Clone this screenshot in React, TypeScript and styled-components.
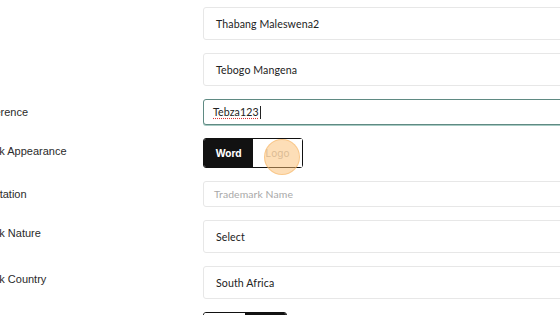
import React from "react";
import styled, { createGlobalStyle } from "styled-components";

const GlobalStyle = createGlobalStyle`
  html, body {
    margin: 0;
    padding: 0;
    background: #ffffff;
    overflow: hidden;
  }
`;

const Form = styled.div`
  display: flex;
  flex-direction: column;
  gap: 13px;
  padding-top: 7px;
  margin-left: -48px;
  width: 700px;
`;

const Row = styled.div`
  display: grid;
  grid-template-columns: 251px 420px;
  align-items: start;
`;

const Label = styled.div`
  font-family: "Liberation Sans", Arial, sans-serif;
  font-size: 11px;
  line-height: 16px;
  color: #2a2a2a;
  padding-top: 5px;
  white-space: nowrap;
`;

const Field = styled.div<{ $height: number; $focused?: boolean; $inset?: number }>`
  box-sizing: border-box;
  height: ${({ $height }) => $height}px;
  display: flex;
  align-items: center;
  padding-left: ${({ $inset = 12 }) => $inset}px;
  border: 1px solid ${({ $focused }) => ($focused ? "#5f8a83" : "#e7e7e7")};
  box-shadow: ${({ $focused }) => ($focused ? "0 1px 0 #a8cbc4" : "none")};
  border-radius: 3px;
  background: #fff;
  font-family: "Lato", "Inter", sans-serif;
  font-size: 10.6px;
  letter-spacing: 0.1px;
  color: #222;
`;

const Placeholder = styled.span`
  color: #a8a8a8;
  font-size: 10.4px;
`;

const Typed = styled.span`
  text-decoration: underline dotted #d33;
  text-underline-offset: 2px;
`;

const Caret = styled.span`
  display: inline-block;
  width: 1px;
  height: 13px;
  background: #222;
  margin-left: 1px;
`;

const Toggle = styled.div<{ $width: number }>`
  position: relative;
  box-sizing: border-box;
  width: ${({ $width }) => $width}px;
  height: 30px;
  display: flex;
  border: 1px solid #111;
  border-radius: 3px;
`;

const ToggleOption = styled.div<{ $active?: boolean }>`
  flex: 1;
  display: flex;
  align-items: center;
  justify-content: center;
  background: ${({ $active }) => ($active ? "#121212" : "#fff")};
  color: ${({ $active }) => ($active ? "#fff" : "#b9b9b9")};
  font-family: "Inter", "Noto Sans", sans-serif;
  font-size: 10px;
  font-weight: ${({ $active }) => ($active ? 700 : 400)};
  &:first-child {
    border-radius: 2px 0 0 2px;
  }
  &:last-child {
    border-radius: 0 2px 2px 0;
  }
`;

const ClickMark = styled.div`
  position: absolute;
  left: 60px;
  top: 0px;
  width: 34px;
  height: 34px;
  border-radius: 50%;
  background: rgba(252, 190, 112, 0.5);
  border: 1px solid rgba(245, 180, 100, 0.55);
  pointer-events: none;
`;

export default function App() {
  return (
    <>
      <GlobalStyle />
      <Form>
        <Row>
          <Label>Applicant</Label>
          <Field $height={33}>Thabang Maleswena2</Field>
        </Row>
        <Row>
          <Label>Contact</Label>
          <Field $height={33}>Tebogo Mangena</Field>
        </Row>
        <Row>
          <Label>Your Reference</Label>
          <Field $height={26} $focused $inset={9}>
            <Typed>Tebza123</Typed>
            <Caret />
          </Field>
        </Row>
        <Row>
          <Label>Trademark Appearance</Label>
          <Toggle $width={100}>
            <ToggleOption $active>Word</ToggleOption>
            <ToggleOption>Logo</ToggleOption>
            <ClickMark />
          </Toggle>
        </Row>
        <Row>
          <Label>Representation</Label>
          <Field $height={26} $inset={10}>
            <Placeholder>Trademark Name</Placeholder>
          </Field>
        </Row>
        <Row>
          <Label>Trademark Nature</Label>
          <Field $height={33}>Select</Field>
        </Row>
        <Row>
          <Label>Trademark Country</Label>
          <Field $height={33}>South Africa</Field>
        </Row>
        <Row>
          <Label>Series Mark</Label>
          <Toggle $width={84}>
            <ToggleOption>No</ToggleOption>
            <ToggleOption $active>Yes</ToggleOption>
          </Toggle>
        </Row>
      </Form>
    </>
  );
}
